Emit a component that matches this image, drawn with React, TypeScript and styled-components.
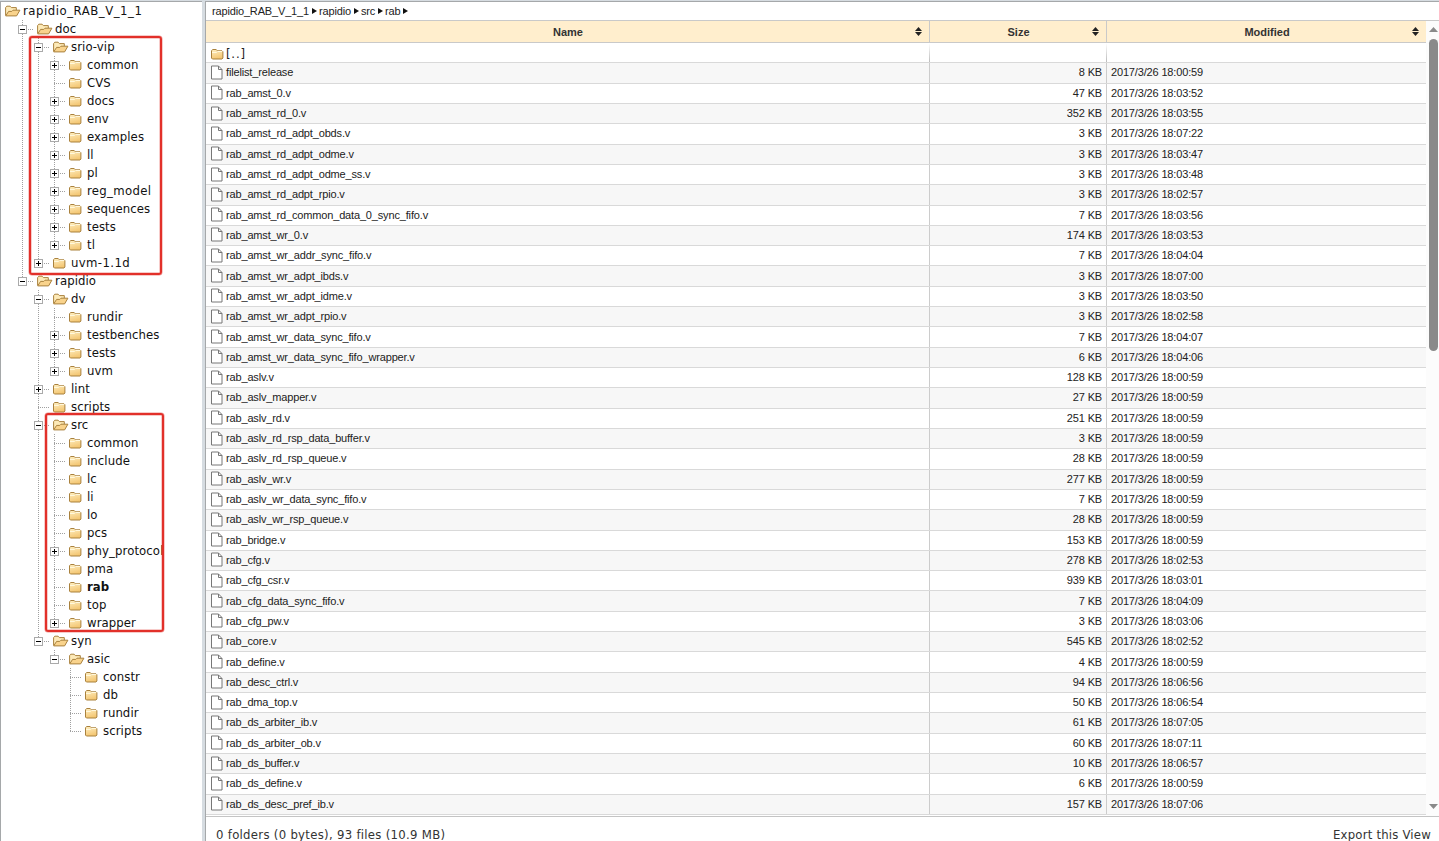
import React from 'react';
import styled, { createGlobalStyle, css } from 'styled-components';

const Global = createGlobalStyle`
  * { box-sizing: border-box; }
  html, body { margin: 0; padding: 0; background: #fff; }
  body { width: 1439px; height: 841px; overflow: hidden; }
`;

const treeFont = css`font-family: 'DejaVu Sans Condensed', 'DejaVu Sans', sans-serif; font-stretch: condensed;`;

const Page = styled.div`
  position: relative;
  display: flex;
  width: 1439px;
  height: 841px;
  background: #d6dce1;
  padding-top: 1px;
`;

const TreePane = styled.nav`
  width: 202px;
  height: 840px;
  background: #fff;
  border-top: 1px solid #a5a8aa;
  border-left: 1px solid #a5a8aa;
  overflow: hidden;
`;

const TreeRow = styled.div`
  display: flex;
  align-items: center;
  height: 18px;
  padding-left: 4px;
`;

const Lead = styled.span`width: 9px; flex: none;`;

const dotsV = 'repeating-linear-gradient(to bottom, #a0a0a0 0 1px, transparent 1px 2px)';
const dotsH = 'repeating-linear-gradient(to right, #a0a0a0 0 1px, transparent 1px 2px)';

const Guide = styled.span<{ $line: boolean }>`
  flex: none;
  width: 16px;
  height: 18px;
  background: ${p => (p.$line ? dotsV : 'none')} 8px 0 / 1px 18px no-repeat;
`;

const Branch = styled.span<{ $last: boolean }>`
  flex: none;
  width: 23px;
  height: 18px;
  padding: 5px 0 0 4px;
  background: ${dotsV} 8px 0 / 1px ${p => (p.$last ? '9px' : '18px')} no-repeat,
    ${dotsH} 8px 9px / 12px 1px no-repeat;
  svg { display: block; }
`;

const TreeLabel = styled.span<{ $bold?: boolean; $track?: number }>`
  ${treeFont}
  font-size: 13px;
  line-height: 18px;
  color: #111;
  white-space: nowrap;
  font-weight: ${p => (p.$bold ? 700 : 400)};
  letter-spacing: ${p => p.$track ?? 0.08}px;
`;

const IconSlot = styled.span`
  flex: none;
  display: flex;
  width: 18px;
`;

const FolderClosed = () => (
  <svg width="13" height="12" viewBox="0 0 13 12">
    <defs>
      <linearGradient id="fold" x1="0" y1="0" x2="0.3" y2="1">
        <stop offset="0" stopColor="#fff0c4" />
        <stop offset="1" stopColor="#f4c774" />
      </linearGradient>
    </defs>
    <path d="M.5 2.8 1.6 1.5h3.6l1.2 1.3h4.6l.9.9v6.4l-.9.9H1.4l-.9-.9z" fill="url(#fold)" stroke="#a9813d" />
    <path d="M1 4.5h4.6l1-1h4.6" fill="none" stroke="#fff8dd" />
  </svg>
);

const FolderOpen = () => (
  <svg width="16" height="12" viewBox="0 0 16 12">
    <path d="M.6 10.4V2.6L1.8 1.2h3.3l1.3 1.4h4.9v2.6" fill="#fdeab8" stroke="#a9813d" />
    <path d="M.7 10.9 3.6 6.4h3.2L8 5.2h6.9l-3.3 5.7z" fill="#f9d38c" stroke="#a9813d" strokeLinejoin="round" />
  </svg>
);

const Toggle = ({ open }: { open: boolean }) => (
  <svg width="9" height="9" viewBox="0 0 9 9" shapeRendering="crispEdges">
    <rect x=".5" y=".5" width="8" height="8" fill="#fff" stroke="#aaa" />
    <path d="M2 4h5v1H2z" fill="#000" />
    {!open && <path d="M4 2h1v5H4z" fill="#000" />}
  </svg>
);

type Node = { n: string; t?: '+' | '-'; bold?: boolean; track?: number; kids?: Node[] };
const leafs = (s: string): Node[] =>
  s.split(' ').map(x => (x[0] === '+' ? { n: x.slice(1), t: '+' as const } : { n: x }));

const tree: Node[] = [
  {
    n: 'doc', t: '-', kids: [
      {
        n: 'srio-vip', t: '-',
        kids: [
          ...leafs('+common CVS +docs +env +examples +ll +pl'),
          { n: 'reg_model', t: '+', track: 0.32 },
          ...leafs('+sequences +tests +tl'),
        ],
      },
      { n: 'uvm-1.1d', t: '+', track: 0.38 },
    ],
  },
  {
    n: 'rapidio', t: '-', kids: [
      { n: 'dv', t: '-', kids: leafs('rundir +testbenches +tests +uvm') },
      { n: 'lint', t: '+' },
      { n: 'scripts' },
      {
        n: 'src', t: '-',
        kids: [
          ...leafs('common include lc li lo pcs'),
          { n: 'phy_protocol', t: '+', track: 0.1 },
          { n: 'pma' },
          { n: 'rab', bold: true },
          ...leafs('top +wrapper'),
        ],
      },
      { n: 'syn', t: '-', kids: [{ n: 'asic', t: '-', kids: leafs('constr db rundir scripts') }] },
    ],
  },
];

const Branches = ({ nodes, lines }: { nodes: Node[]; lines: boolean[] }) => (
  <>
    {nodes.map((node, i) => {
      const last = i === nodes.length - 1;
      return (
        <React.Fragment key={node.n}>
          <TreeRow>
            <Lead />
            {lines.map((l, k) => <Guide key={k} $line={l} />)}
            <Branch $last={last}>{node.t && <Toggle open={node.t === '-'} />}</Branch>
            <IconSlot>{node.t === '-' ? <FolderOpen /> : <FolderClosed />}</IconSlot>
            <TreeLabel $bold={node.bold} $track={node.track}>{node.n}</TreeLabel>
          </TreeRow>
          {node.kids && <Branches nodes={node.kids} lines={[...lines, !last]} />}
        </React.Fragment>
      );
    })}
  </>
);

const Mark = styled.div<{ $x: number; $y: number; $w: number; $h: number }>`
  position: absolute;
  left: ${p => p.$x}px;
  top: ${p => p.$y}px;
  width: ${p => p.$w}px;
  height: ${p => p.$h}px;
  border: 2px solid #e2302a;
  border-radius: 3px;
  box-shadow: 0 0 0 0.5px rgba(226, 48, 42, 0.5), inset 0 0 0 0.5px rgba(226, 48, 42, 0.5);
`;

const Main = styled.main`
  margin-left: 3px;
  width: 1234px;
  height: 840px;
  display: flex;
  flex-direction: column;
  background: #fff;
  border-top: 1px solid #a5a8aa;
  border-left: 1px solid #a5a8aa;
  font-family: 'Liberation Sans', Arial, sans-serif;
  font-size: 11px;
  letter-spacing: -0.16px;
  color: #222;
`;

const Crumbs = styled.div`
  flex: none;
  display: flex;
  align-items: center;
  height: 18px;
  padding-left: 6px;
`;

const Crumb = styled.span`
  display: flex;
  align-items: center;
  svg { margin: 0 2px 0 3px; }
`;

const Body = styled.div`
  flex: none;
  display: flex;
  height: 797px;
  border-top: 1px solid #c9c9c9;
  border-bottom: 1px solid #c4c4c4;
`;

const Table = styled.div`
  width: 1220px;
  overflow: hidden;
`;

const Grid = styled.div`
  display: grid;
  grid-template-columns: 724px 177px 319px;
`;

const HeadRow = styled(Grid)`
  height: 22px;
  background: #ffeecd;
  border-bottom: 1px solid #c9c9c9;
`;

const HeadCell = styled.div`
  display: flex;
  align-items: center;
  font-weight: 700;
  letter-spacing: 0;
  color: #333;
  padding: 0 7px 0 15px;
  border-right: 1px solid #c9c9c9;
  &:last-child { border-right: 0; }
  span { flex: 1; text-align: center; }
`;

const FileRow = styled(Grid)<{ $alt?: boolean }>`
  height: 20.315px;
  background: ${p => (p.$alt ? '#f7f7f7' : '#fff')};
  border-bottom: 1px solid #d9d9d9;
`;

const Cell = styled.div<{ $right?: boolean }>`
  display: flex;
  align-items: center;
  justify-content: ${p => (p.$right ? 'flex-end' : 'flex-start')};
  padding: 0 4px 1px;
  white-space: pre;
  border-right: 1px solid #ccc;
  &:last-child { border-right: 0; }
`;

const UpCell = styled(Cell)`
  padding: 3px 5px 0 4px;
  border-right: 0;
  background: linear-gradient(#fff, #bbb) right top / 1px 100% no-repeat;
`;

const NameIcon = styled.span`
  flex: none;
  display: flex;
  width: 15px;
  padding-left: 1px;
  margin-right: 1px;
`;

const UpLabel = styled.span`
  ${treeFont}
  font-size: 13px;
  line-height: 15px;
  margin-top: -2px;
  letter-spacing: 0.8px;
`;

const Doc = () => (
  <svg width="12" height="15" viewBox="0 0 12 15">
    <path d="M.5 1h7l3.5 3.5V14H.5z" fill="#fff" stroke="#777" />
    <path d="M7.5 1v3.5H11" fill="none" stroke="#777" />
  </svg>
);

const Sort = () => (
  <svg width="7" height="9" viewBox="0 0 7 9">
    <path d="M3.5 0 7 4H0zM0 5h7L3.5 9z" fill="#222" />
  </svg>
);

const Scroll = styled.div`
  flex: 1;
  display: flex;
  flex-direction: column;
  align-items: center;
  padding: 6px 0 7px 1px;
  background: #fcfcfc;
`;

const Thumb = styled.div`
  width: 9px;
  height: 312px;
  margin: 7px 0 auto;
  border-radius: 5px;
  background: #8a8a8a;
`;

const Footer = styled.footer`
  ${treeFont}
  flex: none;
  font-size: 13px;
  color: #333;
  display: flex;
  justify-content: space-between;
  height: 22px;
  padding: 9px 8px 0 10px;
  line-height: 18px;
  letter-spacing: 0.2px;
  white-space: nowrap;
`;

const Summary = styled.span`letter-spacing: 0.29px;`;

const files: [string, string, string][] = `filelist_release 8 18:00:59
rab_amst_0.v 47 18:03:52
rab_amst_rd_0.v 352 18:03:55
rab_amst_rd_adpt_obds.v 3 18:07:22
rab_amst_rd_adpt_odme.v 3 18:03:47
rab_amst_rd_adpt_odme_ss.v 3 18:03:48
rab_amst_rd_adpt_rpio.v 3 18:02:57
rab_amst_rd_common_data_0_sync_fifo.v 7 18:03:56
rab_amst_wr_0.v 174 18:03:53
rab_amst_wr_addr_sync_fifo.v 7 18:04:04
rab_amst_wr_adpt_ibds.v 3 18:07:00
rab_amst_wr_adpt_idme.v 3 18:03:50
rab_amst_wr_adpt_rpio.v 3 18:02:58
rab_amst_wr_data_sync_fifo.v 7 18:04:07
rab_amst_wr_data_sync_fifo_wrapper.v 6 18:04:06
rab_aslv.v 128 18:00:59
rab_aslv_mapper.v 27 18:00:59
rab_aslv_rd.v 251 18:00:59
rab_aslv_rd_rsp_data_buffer.v 3 18:00:59
rab_aslv_rd_rsp_queue.v 28 18:00:59
rab_aslv_wr.v 277 18:00:59
rab_aslv_wr_data_sync_fifo.v 7 18:00:59
rab_aslv_wr_rsp_queue.v 28 18:00:59
rab_bridge.v 153 18:00:59
rab_cfg.v 278 18:02:53
rab_cfg_csr.v 939 18:03:01
rab_cfg_data_sync_fifo.v 7 18:04:09
rab_cfg_pw.v 3 18:03:06
rab_core.v 545 18:02:52
rab_define.v 4 18:00:59
rab_desc_ctrl.v 94 18:06:56
rab_dma_top.v 50 18:06:54
rab_ds_arbiter_ib.v 61 18:07:05
rab_ds_arbiter_ob.v 60 18:07:11
rab_ds_buffer.v 10 18:06:57
rab_ds_define.v 6 18:00:59
rab_ds_desc_pref_ib.v 157 18:07:06`.split('\n').map(l => l.split(' ') as [string, string, string]);

export default function App() {
  return (
    <Page>
      <Global />
      <TreePane>
        <TreeRow>
          <IconSlot><FolderOpen /></IconSlot>
          <TreeLabel $track={0.53}>rapidio_RAB_V_1_1</TreeLabel>
        </TreeRow>
        <Branches nodes={tree} lines={[]} />
      </TreePane>
      <Main>
        <Crumbs>
          {['rapidio_RAB_V_1_1', 'rapidio', 'src', 'rab'].map(c => (
            <Crumb key={c}>
              {c}
              <svg width="5" height="6" viewBox="0 0 5 6"><path d="M0 0 5 3 0 6z" fill="#111" /></svg>
            </Crumb>
          ))}
        </Crumbs>
        <Body>
          <Table>
            <HeadRow>
              {['Name', 'Size', 'Modified'].map(h => (
                <HeadCell key={h}><span>{h}</span><Sort /></HeadCell>
              ))}
            </HeadRow>
            <FileRow>
              <UpCell><NameIcon><FolderClosed /></NameIcon><UpLabel>[..]</UpLabel></UpCell>
              <UpCell />
              <Cell />
            </FileRow>
            {files.map(([name, size, time], i) => (
              <FileRow key={name} $alt={i % 2 === 0}>
                <Cell><NameIcon><Doc /></NameIcon>{name}</Cell>
                <Cell $right>{size} KB</Cell>
                <Cell>2017/3/26 {time}</Cell>
              </FileRow>
            ))}
          </Table>
          <Scroll>
            <svg width="9" height="5" viewBox="0 0 9 5"><path d="M4.5 0 9 5H0z" fill="#8a8a8a" /></svg>
            <Thumb />
            <svg width="9" height="5" viewBox="0 0 9 5"><path d="M0 0h9L4.5 5z" fill="#8a8a8a" /></svg>
          </Scroll>
        </Body>
        <Footer>
          <Summary>0 folders (0 bytes), 93 files (10.9 MB)</Summary>
          <span>Export this View</span>
        </Footer>
      </Main>
      <Mark $x={29} $y={36} $w={133} $h={239} />
      <Mark $x={45} $y={413} $w={119} $h={219} />
    </Page>
  );
}
